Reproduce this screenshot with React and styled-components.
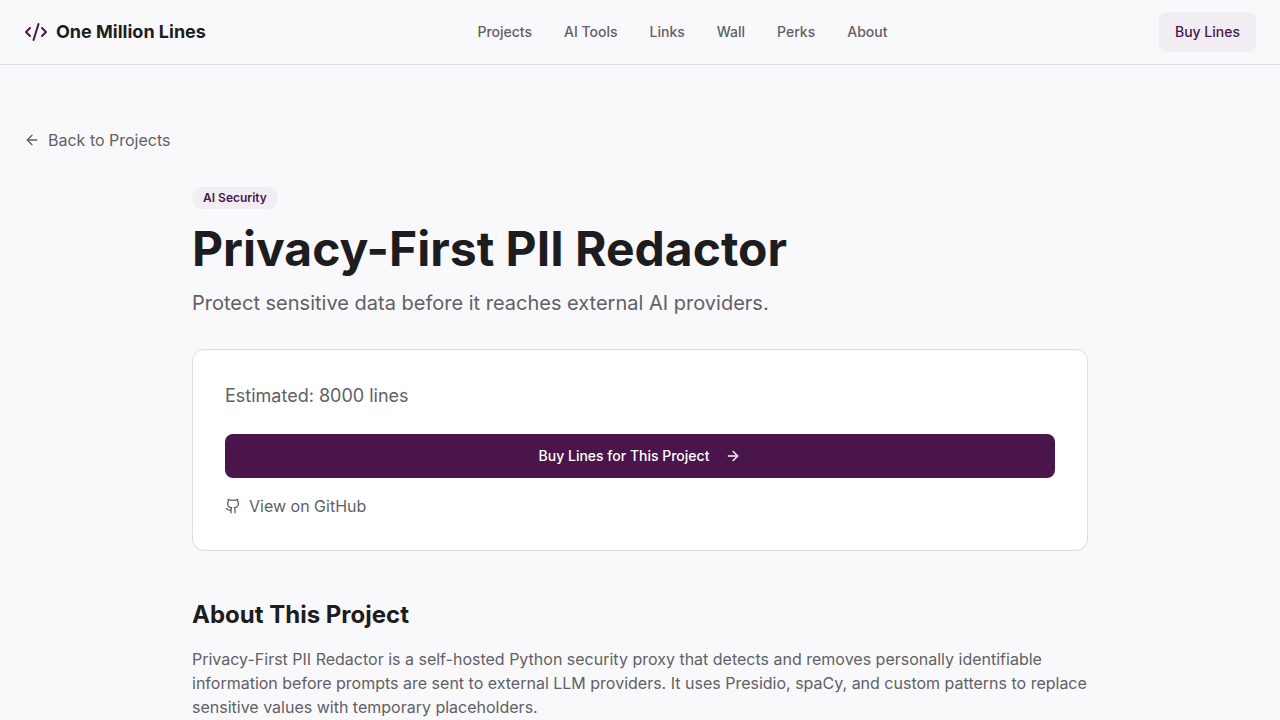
import React from 'react';
import styled, { createGlobalStyle } from 'styled-components';
import { ArrowLeft, ArrowRight, CodeXml, Github } from 'lucide-react';

const plum = '#4a154b';
const plumTint = '#f2edf3';
const ink = '#1d1c1f';
const muted = '#616066';
const border = '#dddce3';
const background = '#f9f9fb';

const navItems = [
	{ href: '#projects', label: 'Projects' },
	{ href: '#ai-tools', label: 'AI Tools' },
	{ href: '#links', label: 'Links' },
	{ href: '#wall', label: 'Wall' },
	{ href: '#perks', label: 'Perks' },
	{ href: '#about', label: 'About' },
];

const project = {
	category: 'AI Security',
	title: 'Privacy-First PII Redactor',
	tagline: 'Protect sensitive data before it reaches external AI providers.',
	estimatedLines: 8000,
	about:
		'Privacy-First PII Redactor is a self-hosted Python security proxy that detects and removes personally identifiable information before prompts are sent to external LLM providers. It uses Presidio, spaCy, and custom patterns to replace sensitive values with temporary placeholders.',
};

const App = () => (
	<>
		<GlobalStyle />
		<Header>
			<Brand href='#home'>
				<CodeXml size={24} color={plum} aria-hidden='true' />
				One Million Lines
			</Brand>
			<Nav>
				{navItems.map(({ href, label }) => (
					<NavLink key={href} href={href}>
						{label}
					</NavLink>
				))}
			</Nav>
			<SoftButton type='button'>Buy Lines</SoftButton>
		</Header>
		<Main>
			<TextLink href='#projects'>
				<ArrowLeft size={16} aria-hidden='true' />
				Back to Projects
			</TextLink>
			<Article>
				<Badge>{project.category}</Badge>
				<Title>{project.title}</Title>
				<Tagline>{project.tagline}</Tagline>
				<Card>
					<Estimate>Estimated: {project.estimatedLines} lines</Estimate>
					<PrimaryButton type='button'>
						Buy Lines for This Project
						<ArrowRight size={16} aria-hidden='true' />
					</PrimaryButton>
					<TextLink href='#github'>
						<Github size={16} aria-hidden='true' />
						View on GitHub
					</TextLink>
				</Card>
				<SectionTitle>About This Project</SectionTitle>
				<Paragraph>{project.about}</Paragraph>
			</Article>
		</Main>
	</>
);

const GlobalStyle = createGlobalStyle`
	*, *::before, *::after {
		box-sizing: border-box;
	}
	html {
		scrollbar-width: none;
	}
	body {
		margin: 0;
		background: ${background};
		color: ${ink};
		font-family: Inter, 'Liberation Sans', sans-serif;
		font-size: 16px;
		line-height: 24px;
		-webkit-font-smoothing: antialiased;
	}
	h1, h2, p {
		margin: 0;
	}
	a {
		color: inherit;
		text-decoration: none;
	}
	button {
		border: 0;
		font: inherit;
		cursor: pointer;
	}
`;

const Header = styled.header`
	position: sticky;
	top: 0;
	display: flex;
	align-items: center;
	justify-content: space-between;
	padding: 12px 24px;
	background: ${background};
	border-bottom: 1px solid ${border};
`;

const Brand = styled.a`
	display: flex;
	align-items: center;
	gap: 8px;
	font-size: 18px;
	font-weight: 700;
	line-height: 28px;
`;

const Nav = styled.nav`
	display: flex;
	gap: 32px;
`;

const NavLink = styled.a`
	color: ${muted};
	font-size: 14px;
	font-weight: 500;
	line-height: 20px;
`;

const SoftButton = styled.button`
	height: 40px;
	padding: 0 16px;
	border-radius: 8px;
	background: ${plumTint};
	color: ${plum};
	font-size: 14px;
	font-weight: 500;
	line-height: 20px;
`;

const Main = styled.main`
	padding: 63px 24px 64px;
`;

const TextLink = styled.a`
	display: flex;
	align-items: center;
	gap: 8px;
	width: fit-content;
	color: ${muted};
`;

const Article = styled.article`
	max-width: 896px;
	margin: 32px auto 0;
`;

const Badge = styled.span`
	display: inline-block;
	padding: 3px 11px;
	border-radius: 11px;
	background: ${plumTint};
	color: ${plum};
	font-size: 12px;
	font-weight: 600;
	line-height: 16px;
`;

const Title = styled.h1`
	margin-top: 16px;
	font-size: 48px;
	font-weight: 700;
	line-height: 48px;
`;

const Tagline = styled.p`
	margin-top: 16px;
	color: ${muted};
	font-size: 20px;
	line-height: 28px;
`;

const Card = styled.section`
	margin-top: 32px;
	padding: 32px;
	border: 1px solid ${border};
	border-radius: 12px;
	background: #ffffff;
`;

const Estimate = styled.p`
	color: ${muted};
	font-size: 18px;
	line-height: 28px;
`;

const PrimaryButton = styled.button`
	display: flex;
	align-items: center;
	justify-content: center;
	gap: 16px;
	width: 100%;
	height: 44px;
	margin: 24px 0 16px;
	border-radius: 8px;
	background: ${plum};
	color: #ffffff;
	font-size: 14px;
	font-weight: 500;
	line-height: 20px;
`;

const SectionTitle = styled.h2`
	margin-top: 48px;
	font-size: 24px;
	font-weight: 700;
	line-height: 32px;
`;

const Paragraph = styled.p`
	margin-top: 16px;
	color: ${muted};
`;

export default App;
